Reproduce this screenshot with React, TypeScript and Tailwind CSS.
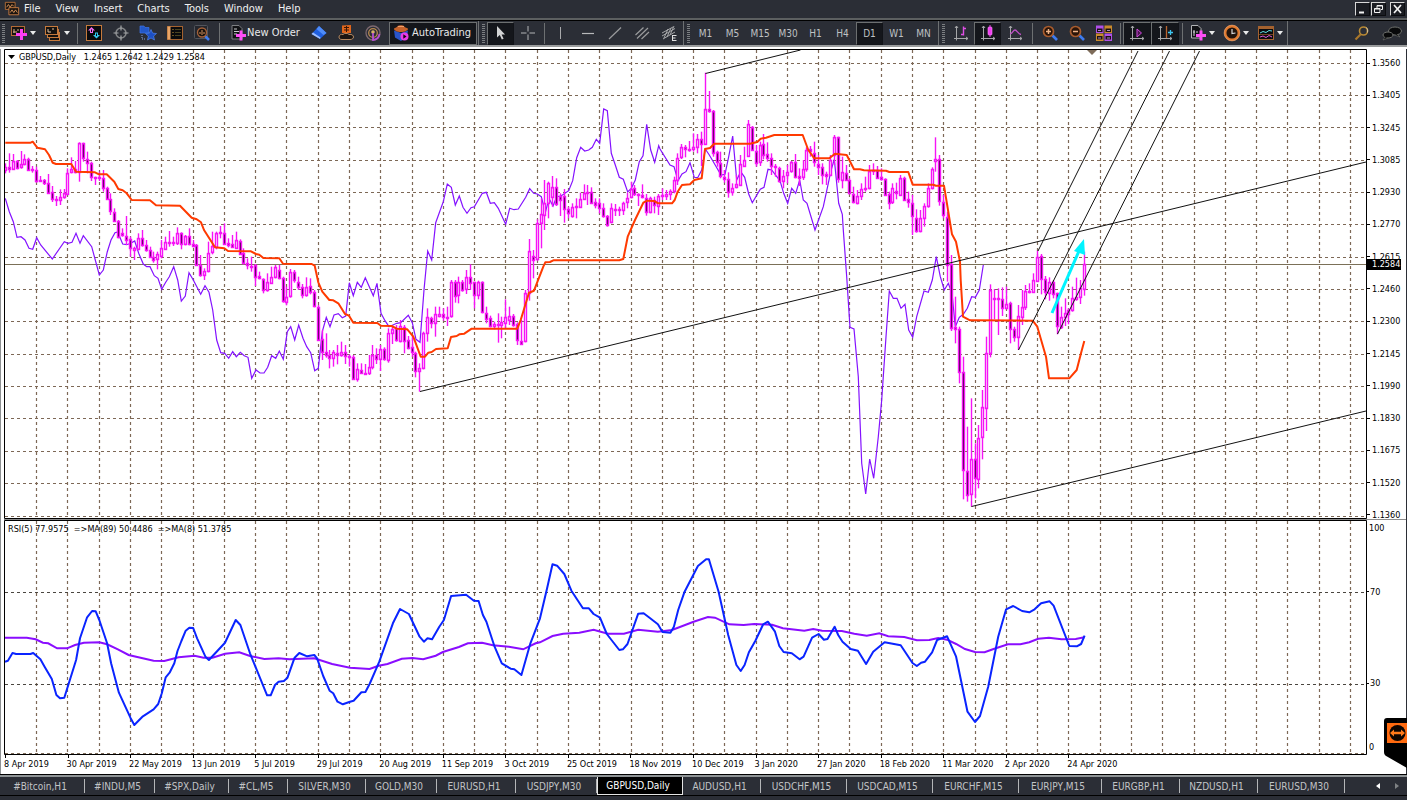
import React from "react";
import type { ReactNode } from "react";

/* ---------- market data ---------- */

// Bars are stored as "high top bottom low direction", in thirds of a chart unit below `base`.
const BAR_BLOCKS: { base: number; bars: string }[] = [
  {
    base: 120,
    bars:
      "130 140 150 160 u|100 140 145 158 d|102 122 145 150 u|120 122 142 148 d|93 133 143 146 u|103 117 133 136 u|113 116 148 150 d|138 147 151 158 d|140 150 183 188 d|168 180 183 186 d|177 180 190 195 d|162 188 217 220 d|198 216 238 246 d|228 237 241 258 d|208 230 240 255 u|207 220 232 236 u|145 158 220 223 u|112 147 157 160 u|123 147 157 160 d|67 70 157 185 u|68 70 115 125 d|95 117 130 160 d|125 130 173 183 d|170 172 174 195 d|155 171 174 183 d|150 175 205 215 d|200 205 237 240 d|220 237 273 285 d|265 275 303 306 d|300 303 350 355 d|325 340 347 350 d|288 347 360 375 d|350 358 385 410 d|380 385 390 420 u|340 353 387 390 u|330 353 375 380 d|360 375 390 395 d|380 390 410 413 d|395 410 418 428 d|395 403 418 448 u|360 385 408 415 u|350 365 385 390 u|333 367 370 380 d|350 367 370 378 d|322 340 370 375 u|337 340 372 388 d|345 348 373 376 u|325 348 373 376 d|360 372 378 382 d|372 374 435 437 d|405 435 466 470 d|445 452 465 480 u|365 398 452 457 u|335 377 395 403 u|335 338 380 388 u|318 337 340 355 u|310 338 372 375 d|355 370 375 382 d|345 372 380 384 d|335 360 383 385 u|358 362 400 403 d|385 400 430 433 d|415 430 435 448 d|410 437 440 455 d|432 435 470 498 d|455 468 475 478 d|475 476 510 520 d|460 487 510 515 u|440 472 490 492 u|435 440 470 475 u|435 450 475 478 d|470 475 545 548 d|500 530 545 556 u|447 457 530 533 u|450 457 480 488 d|470 485 500 510 d|492 500 523 535 d|472 500 523 530 u|475 498 515 523 d|510 517 560 562 d|555 560 660 662 d|630 658 698 720 d|640 695 705 713 d|690 705 713 745 d|690 695 713 740 u|675 700 705 733 d",
  },
  {
    base: 90,
    bars:
      "755 785 795 800 u|765 785 797 822 d|793 798 802 830 d|795 800 867 870 d|820 838 868 875 u|820 840 848 852 d|822 848 850 855 d|795 832 850 855 u|765 795 832 838 u|775 795 808 822 d|765 778 808 843 u|772 778 808 812 d|715 728 808 818 u|710 718 730 762 u|705 715 752 755 d|690 708 752 757 u|705 710 752 790 d|738 750 773 778 d|735 772 787 800 d|785 790 843 862 d|820 835 843 905 u|725 730 835 838 u|655 680 728 755 u|680 683 698 715 d|650 672 700 740 u|650 672 678 682 u|655 672 682 692 d|650 680 683 708 d|570 577 680 683 u|570 577 620 638 d|560 577 617 640 u|570 577 600 605 d|540 562 598 612 u|523 562 580 600 d|575 577 617 655 d|572 577 617 628 u|574 577 668 670 d|650 668 685 700 d|677 683 707 712 d|695 703 708 718 u|670 703 706 758 d|680 695 703 745 u|628 680 697 715 u|650 678 690 705 u|672 677 705 710 d|697 703 750 765 d|690 752 760 763 d|600 610 755 757 u|447 482 608 632 u|480 497 510 565 d|388 400 508 512 u|325 373 400 475 u|270 338 373 420 u|275 280 340 385 u|258 290 320 350 u|265 292 343 348 d|310 318 330 378 d|297 318 358 398 d|350 357 370 385 d|340 352 380 383 u|325 348 352 385 u|308 327 350 353 u|283 308 325 328 u|285 305 308 345 u|292 305 337 342 d|325 335 343 355 d|325 340 355 370 d|340 355 378 383 d|375 378 405 410 d|340 355 397 400 u|342 358 362 378 d|350 358 362 378 u|335 338 360 375 u|308 325 338 355 u|275 297 322 325 u|285 295 312 318 d|310 312 315 348 d|283 315 320 325 d|312 325 368 377 d|320 325 367 370 u|320 330 345 370 d|312 317 347 375 u|295 315 318 330 u|300 312 318 330 u|298 303 312 330 u|260 270 303 310 u|190 205 270 285 u",
  },
  {
    base: 60,
    bars:
      "252 262 293 297 u|255 262 267 292 d|243 268 272 275 u|220 262 268 275 u|222 238 262 280 u|215 238 253 318 d|38 147 252 255 u|93 147 152 158 d|150 153 278 290 d|272 276 307 320 d|275 310 350 355 d|330 352 357 368 d|337 357 397 413 d|370 383 395 407 u|345 373 382 385 u|285 313 375 378 u|260 300 317 320 u|180 193 288 290 u|198 200 270 272 d|255 272 307 320 d|245 255 305 318 u|222 253 285 298 d|247 283 296 305 d|280 295 318 345 d|312 318 322 350 d|320 325 363 368 d|330 347 363 385 u|315 335 345 370 u|303 307 335 338 u|282 307 353 355 d|325 348 353 378 d|300 328 353 360 u|262 270 328 335 u|258 268 275 290 d|245 280 308 320 d|285 312 320 345 d|310 320 343 373 d|335 342 347 375 d|285 300 345 348 u|225 230 285 315 u|230 232 358 368 d|290 335 358 385 u|315 338 358 362 d|355 360 400 403 d|380 402 427 430 d|390 408 430 433 u|370 388 408 420 u|350 385 388 395 u|315 332 383 388 u|310 330 333 345 u|318 330 353 357 d|325 352 358 362 d|355 357 405 408 d|395 403 430 448 d|370 385 428 432 u|368 393 400 418 d|345 353 403 405 u|350 353 420 423 d|395 418 428 443 d|405 430 470 525 d|448 473 512 518 d|450 473 512 517 u|430 437 473 500 u|370 383 437 443 u|322 328 385 388 u|232 297 303 335 u|285 298 425 437 d|405 425 465 475 d|455 470 613 665 d",
  },
  {
    base: 230,
    bars:
      "75 103 295 303 d|200 292 297 340 d|290 297 427 460 d|380 427 722 808 d|590 722 793 815 d|505 688 793 830 u|640 688 745 805 d|585 623 745 775 u|480 532 622 688 u|320 368 532 603 u|163 180 368 382 u|177 203 206 268 d|175 205 208 315 d|172 207 233 258 d|170 222 235 238 u|215 220 298 340 d|290 298 322 335 d|225 258 322 360 u|180 230 260 285 u|165 183 230 240 u|160 183 186 190 d|130 150 185 188 u|62 80 152 155 u|72 78 148 193 d|138 147 187 208 d|142 155 187 212 u|150 155 190 205 d|188 190 290 313 d|230 260 290 297 u|205 250 262 288 u|235 240 252 283 u|170 205 240 245 u|143 200 205 212 u|150 175 203 222 u|65 103 178 197 u",
  },
];

type Bar = { x: number; high: number; top: number; bottom: number; low: number; up: boolean };

const BARS: Bar[] = BAR_BLOCKS.flatMap(({ base, bars }) =>
  bars.split("|").map((entry) => {
    const [high, top, bottom, low, dir] = entry.split(" ");
    const y = (v: string) => base + Number(v) / 3;
    return { high: y(high), top: y(top), bottom: y(bottom), low: y(low), up: dir === "u" };
  }),
).map((bar, i) => ({ ...bar, x: Math.floor(5.4 + 3.91 * i) + 0.5 }));

// Polylines are made of blocks, each with its own origin and scale.
type LineBlock = { x: number; y: number; sx?: number; points: string };

const toPoints = (blocks: LineBlock[]) =>
  blocks
    .map(({ x, y, sx = 3, points }) =>
      points
        .split(" ")
        .map((pair) => {
          const [px, py] = pair.split(",").map(Number);
          return `${(x + px / sx).toFixed(1)},${(y + py / 3).toFixed(1)}`;
        })
        .join(" "),
    )
    .join(" ");

const BASE_LINE = toPoints([
  {
    x: 0,
    y: 120,
    points:
      "16,68 92,68 98,65 112,83 135,88 147,105 158,128 168,132 214,132 228,155 285,157 297,163 320,163 343,185 355,207 368,211 380,220 395,240 450,241 468,256 540,257 575,293 590,298 603,307 612,330 645,382 673,385 684,393 753,394 768,402 778,404 790,414 838,415 849,431 935,432 944,437 955,487 967,515 988,540",
  },
  {
    x: 330,
    y: 90,
    points:
      "0,630 10,631 25,640 45,672 57,677 70,698 142,699 153,707 185,708 200,716 232,718 250,740 272,800 285,800 295,788 305,786 318,777 353,775 363,741 380,738 388,733 403,731 425,716 562,716 572,690 597,608 612,602 640,530 646,517 660,516 670,511 868,511 880,507 893,440 915,390 940,338 952,332 972,333 985,340",
  },
  {
    x: 660,
    y: 60,
    points:
      "0,430 36,430 44,420 53,395 66,375 90,373 103,360 125,355 135,267 150,264 163,251 270,251 292,246 302,236 318,233 343,225 428,225 445,270 463,295 508,295 525,281 560,285 582,328 600,328 612,331 678,332 688,336 745,336 758,374 820,374 828,377 852,377 876,523 888,545 900,605",
  },
  {
    x: 830,
    y: 230,
    points: "392,150 399,260 420,271 608,272 622,290 648,380 657,445 718,445 740,420 753,370 763,333",
  },
]);

const LAG_LINE = toPoints([
  {
    x: 0,
    y: 120,
    points:
      "16,235 28,275 40,305 51,352 63,350 75,360 87,385 98,388 110,353 122,375 157,417 193,365 204,370 216,367 228,340 240,370 250,347 275,380 298,465 310,450 322,395 333,360 345,338 353,336 368,372 380,374 392,370 404,363 416,400 430,432 440,440 450,440 463,467 474,475 485,508 497,487 508,470 521,440 533,480 544,543 556,528 567,458 580,480 602,523 615,497 627,517 638,570 650,660 662,698 674,700 686,715 698,695 709,710 721,697 733,707 744,712 755,775 768,750 780,759 792,759 803,742 815,707 827,715 838,693 850,718 862,635 872,620 884,660 896,615 909,655 920,680 932,698 944,752 955,745 967,635 979,592",
  },
  {
    x: 330,
    y: 90,
    points:
      "0,710 12,675 25,671 37,683 47,678 58,578 70,617 82,577 94,592 106,563 130,617 141,580 153,670 165,692 177,710 200,700 212,698 235,676 247,698 258,748 270,757 282,600 293,483 305,510 317,398 340,335 352,282 364,292 376,345 388,318 399,352 411,370 423,353 433,350 457,310 469,307 481,340 493,338 505,355 527,403 539,355 552,359 565,357 587,322 599,296 611,310 622,312 634,320 646,368 657,325 669,348 680,320 693,318 716,302 728,272 740,203 752,172 764,183 776,180 787,172 799,148 809,160 821,57 832,62 844,190 856,225 868,262 880,268 893,306 904,295 916,270 928,215 939,197 950,103 962,180 974,217 986,167",
  },
  {
    x: 660,
    y: 60,
    points:
      "0,267 30,315 42,320 54,362 66,342 78,335 90,308 103,352 113,353 125,330 136,267 148,285 160,305 183,345 195,343 206,290 218,228 230,360 242,335 254,352 266,402 277,428 301,388 312,382 324,328 335,330 348,347 360,362 371,400 383,430 395,385 407,400 419,360 430,420 441,430 465,510 490,440 505,370 512,335 523,298 536,430 547,463",
  },
  {
    x: 830,
    y: 230,
    points:
      "40,0 50,140 60,292 72,297 85,440 95,700 107,792 119,687 131,745 145,620 155,510 168,320 178,183 190,205 201,205 213,235 225,223 236,300 248,322 260,260 282,183 295,187 307,150 319,80 331,140 343,180 355,160 366,190 376,290 388,262 400,253 412,235 425,200 436,202 448,180 460,105",
  },
]);

const RSI_SLOW = toPoints([
  {
    x: 0,
    y: 515,
    sx: 2.8,
    points:
      "14,368 75,368 100,373 120,383 135,385 160,400 188,400 210,390 235,383 278,382 300,388 330,403 360,420 430,437 460,438 500,427 545,422 570,428 595,428 630,416 670,412 700,423 740,432 780,430 810,433 880,430 930,447 980,458 1035,462 1060,452 1085,447 1125,431 1155,429 1185,433 1220,422 1240,411 1285,396 1310,385 1350,383 1380,391 1425,395 1465,403 1500,385",
  },
  {
    x: 540,
    y: 515,
    sx: 2.8,
    points:
      "0,382 35,363 65,356 110,353 150,344 190,356 235,356 275,344 330,350 370,345 430,320 470,306 490,308 530,328 570,330 600,327 650,329 680,340 740,347 765,342 790,347 845,348 880,356 915,362 950,355 975,364 1020,366 1055,376 1090,375 1115,369 1140,374 1165,387 1190,402 1218,411 1245,412 1270,402 1310,388 1345,388 1370,382 1395,371 1425,368 1460,373 1500,372 1524,367",
  },
]);

const RSI_FAST = toPoints([
  {
    x: 0,
    y: 515,
    sx: 2.8,
    points:
      "14,440 22,437 35,414 45,417 85,417 93,414 113,433 125,455 145,492 158,540 168,550 180,548 213,435 224,370 244,307 258,288 268,289 278,315 300,385 311,445 333,533 365,608 376,630 400,604 430,583 443,567 453,535 464,487 475,473 488,445 497,408 508,378 520,347 530,338 541,339 552,370 575,425 585,435 630,383 660,315 673,330 700,415 748,541 758,541 770,510 780,500 795,498 805,488 825,428 838,414 860,424 880,420 888,430 905,483 923,527 933,535 945,560 960,568 980,560 990,557 1012,532 1023,531 1035,507 1062,440 1100,325 1120,282 1145,297 1175,365 1187,380 1197,370 1210,373 1230,335 1243,315 1263,243 1305,239 1327,257 1340,258 1352,300 1362,320 1385,395 1405,445 1430,461 1440,463 1460,480 1485,385",
  },
  {
    x: 540,
    y: 515,
    sx: 2.8,
    points:
      "0,310 20,220 35,148 48,152 68,177 88,227 120,280 137,280 150,297 168,308 187,357 222,405 232,403 245,387 275,296 290,295 305,307 330,328 343,351 365,353 375,335 387,285 405,230 442,153 465,133 473,133 500,230 527,360 550,450 562,468 573,450 585,412 603,377 625,328 638,320 658,350 670,393 682,411 705,415 727,433 738,425 762,368 780,357 795,374 805,372 825,335 835,360 847,380 870,402 890,407 913,447 933,410 965,382 1010,391 1043,444 1055,453 1067,443 1078,440 1098,412 1112,375 1140,364 1165,425 1197,590 1218,621 1232,603 1255,515 1283,365 1305,283 1325,273 1350,288 1370,292 1385,283 1403,265 1427,259 1438,272 1482,393 1503,394 1515,387 1525,362",
  },
]);

const PRICES = [
  "1.3560", "1.3405", "1.3245", "1.3085", "1.2930", "1.2770", "1.2615", "1.2460",
  "1.2300", "1.2145", "1.1990", "1.1830", "1.1675", "1.1520", "1.1360",
];

const DATES = [
  "8 Apr 2019", "30 Apr 2019", "22 May 2019", "13 Jun 2019", "5 Jul 2019", "29 Jul 2019",
  "20 Aug 2019", "11 Sep 2019", "3 Oct 2019", "25 Oct 2019", "18 Nov 2019", "10 Dec 2019",
  "3 Jan 2020", "27 Jan 2020", "18 Feb 2020", "11 Mar 2020", "2 Apr 2020", "24 Apr 2020",
];

const COLUMNS = Array.from({ length: 43 }, (_, i) => Math.floor(5.4 + 31.28 * (i + 1)) + 0.5);
const ROWS = PRICES.map((_, i) => Math.floor(63 + 32.36 * i) + 0.5);

/* ---------- icons ---------- */

function Icon({ children, className = "h-[18px] w-[18px]" }: { children: ReactNode; className?: string }) {
  return (
    <svg viewBox="0 0 18 18" className={className} fill="none" aria-hidden="true">
      {children}
    </svg>
  );
}

const NewChartIcon = () => (
  <Icon>
    <rect x="1.5" y="2.5" width="13" height="9" fill="#15120f" stroke="#b36a35" />
    <path d="M4 5v4M3 8h4M7 6h2M11 5v2" stroke="#d8b08a" />
    <path d="M11.5 5v11M6 10.5h11" stroke="#ff3df5" strokeWidth="3" />
  </Icon>
);
const ProfilesIcon = () => (
  <Icon>
    <rect x="5.5" y="8.5" width="10" height="8" fill="#15120f" stroke="#c67a3c" />
    <rect x="3.5" y="5.5" width="11" height="8" fill="#15120f" stroke="#c67a3c" />
    <rect x="1.5" y="2.5" width="12" height="8" fill="#15120f" stroke="#c67a3c" />
    <path d="M4 5v3M4 8h3M8 5h2" stroke="#e3c3a3" />
  </Icon>
);
const MarketWatchIcon = () => (
  <Icon>
    <rect x="1.5" y="1.5" width="15" height="15" fill="#0a0a0c" stroke="#c67a3c" />
    <path d="M6.5 3 10 6.500H8V9H5V6.500H3Z" fill="#f06cf0" />
    <path d="M11.500 14.500 8 11h2V8.500h3V11h2Z" fill="#31c8f2" />
    <path d="M6.500 5.500V8M11.500 9.500V12" stroke="#0a0a0c" />
  </Icon>
);
const TargetIcon = () => (
  <Icon>
    <circle cx="9" cy="9" r="5" stroke="#858789" strokeWidth="1.5" />
    <path d="M9 1.500v5M9 11.500v5M1.500 9h5M11.500 9h5" stroke="#a5a7a9" strokeWidth="1.2" />
  </Icon>
);
const NavigatorIcon = () => (
  <Icon>
    <path d="M1 2h4l1 1.500h4V9H1Z" fill="#2358c8" stroke="#3d74e6" strokeWidth=".7" />
    <path d="m3 11 0 4h4" stroke="#8ea6d8" strokeDasharray="1 1" />
    <path d="m12 5.500 1.600 3.600 3.900.4-2.900 2.600.9 3.900-3.500-2-3.500 2 .9-3.900-2.900-2.600 3.900-.4Z" fill="#1c4fc4" stroke="#4f84ee" strokeWidth=".7" />
  </Icon>
);
const TerminalIcon = () => (
  <Icon>
    <rect x="1.5" y="2.5" width="15" height="13" fill="#0a0a0c" stroke="#a4622f" />
    <rect x="1.5" y="2.5" width="3" height="13" fill="#e9a566" />
    <path d="M6.500 5.500h1M6.500 8.500h1M6.500 11.500h1" stroke="#c8963a" />
    <path d="M9 5.500h6M9 8.500h6M9 11.500h6" stroke="#4b4320" />
  </Icon>
);
const TesterIcon = () => (
  <Icon>
    <rect x="1.5" y="1.5" width="13" height="13" rx="1" fill="#24262d" stroke="#52555c" />
    <path d="m12 12 4 4" stroke="#3e7bf0" strokeWidth="2.5" />
    <circle cx="9" cy="8.500" r="4.500" fill="#17110d" stroke="#a3613a" strokeWidth="1.4" />
    <path d="M7 10V8M9 11V6M11 10V8" stroke="#d69461" />
  </Icon>
);
const OrderIcon = () => (
  <Icon>
    <path d="M3 1.500h7l3 3V15H3Z" fill="#101114" stroke="#7d7f82" />
    <path d="M5 5h3M5 7.500h5M5 10h3" stroke="#c9cbcc" />
    <path d="M12 6.500v10M7 11.500h10" stroke="#ff4df7" strokeWidth="3" />
  </Icon>
);
const BookIcon = () => (
  <Icon>
    <path d="M9 2 16.500 9 10 15 1.500 10Z" fill="#1f5fe0" />
    <path d="M9 2 16.500 9 13.500 11 6.500 5Z" fill="#4f8cf8" />
    <path d="M1.500 10 10 15l.5-1.500L3 8.500Z" fill="#9fbfff" />
  </Icon>
);
const ServerIcon = () => (
  <Icon>
    <path d="M5 1.500 14 1v8H5Z" fill="#e0661c" />
    <path d="M7 3.500h5M7 6h5M9.500 2v6" stroke="#3a1604" />
    <path d="M2 13c0-2 2-3 4-2.500C7 9 11 9 12 10.500c3-.5 4.500 1 4.500 2.500S15 15.500 13 15.500H5c-2 0-3-1-3-2.500Z" fill="#1a1512" stroke="#b58a63" />
  </Icon>
);
const SignalIcon = () => (
  <Icon>
    <circle cx="9" cy="9" r="7" stroke="#7e6a70" strokeWidth="1.3" />
    <circle cx="9" cy="9" r="4.300" stroke="#b98a4e" strokeWidth="1.3" />
    <circle cx="9" cy="8" r="1.800" fill="#d9b26a" />
    <path d="M9 9v7c4-.5 6-3 6.500-6" stroke="#b34fd0" strokeWidth="1.8" />
  </Icon>
);
const AutoIcon = () => (
  <Icon>
    <path d="M2 6.500 9 9l7-2.500-1 6.500-6 4-6-3.500Z" fill="#2a55c9" />
    <path d="M2 5c0-1.500 3-1 3.500-3C7 1 11 1 12 2c.5 2 4 1.500 4 3s-3 3-7 3-7-1.500-7-3Z" fill="#c5622b" />
    <path d="M6 2.500h6" stroke="#f0a06b" />
    <circle cx="12.500" cy="12.500" r="4" fill="#e83be8" />
    <path d="m11.300 10.300 3.200 2.200-3.200 2.200Z" fill="#15040f" />
  </Icon>
);
const CursorIcon = () => (
  <Icon>
    <path d="M5 2v11.500l2.800-2.500 2 4.500 1.800-.8-2-4.300H13Z" fill="#d2d3d4" />
  </Icon>
);
const CrosshairIcon = () => (
  <Icon>
    <path d="M9 2v5.500M9 10.500V16M2 9h5.500M10.500 9H16" stroke="#b3b4b6" />
  </Icon>
);
const VLineIcon = () => (
  <Icon>
    <path d="M8.500 3v12" stroke="#a8a9ab" />
  </Icon>
);
const HLineIcon = () => (
  <Icon>
    <path d="M3 9.500h12" stroke="#b8b9bb" strokeWidth="1.2" />
  </Icon>
);
const TrendIcon = () => (
  <Icon>
    <path d="M3 15 15 3.500" stroke="#9a9b9d" strokeWidth="1.2" />
  </Icon>
);
const ChannelIcon = () => (
  <Icon>
    <path d="m2.500 11 8-7.500M4 14.500 15 4M8.500 15l7.500-7" stroke="#9a9b9d" strokeWidth="1.2" />
  </Icon>
);
const FiboIcon = () => (
  <Icon>
    <path d="M2 9 13 3M2 12 15 4.500M3 15 15 8M4 14 8 5M7 13l4-9M10 11l4-9" stroke="#a5a6a8" />
    <path d="M12.500 11.500h4M12.500 14h3M12.500 16.500h4M12.500 11v6" stroke="#e0e0e0" />
  </Icon>
);
const Axes = () => (
  <path d="M4.500 2v14.500M2 14.500h14M3 4l1.500-2L6 4M14 13l2 1.500-2 1.500" stroke="#a6a7a9" />
);
const BarsIcon = () => (
  <Icon>
    <Axes />
    <path d="M11.500 2.500v9M9 10.500h2.500M11.500 4.500H14" stroke="#e04fe6" strokeWidth="1.4" />
  </Icon>
);
const CandlesIcon = () => (
  <Icon>
    <Axes />
    <path d="M11 1v12" stroke="#f03df0" />
    <rect x="9" y="3" width="4" height="8" rx="1" fill="#f03df0" stroke="#ff8cff" strokeWidth=".6" />
  </Icon>
);
const LineChartIcon = () => (
  <Icon>
    <Axes />
    <path d="M4 10c3-1 3-4 5-4s3 4 6 4.500" stroke="#c04fc8" strokeWidth="1.3" />
  </Icon>
);
const ZoomGlyph = ({ plus }: { plus: boolean }) => (
  <Icon>
    <path d="m11.500 11.500 4.500 4.500" stroke="#3e7bf0" strokeWidth="2.6" />
    <circle cx="7.500" cy="7.500" r="5" fill="#2a1408" stroke="#a85c2e" strokeWidth="1.7" />
    <path d={plus ? "M5 7.500h5M7.500 5v5" : "M5 7.500h5"} stroke="#f0b488" strokeWidth="1.5" />
  </Icon>
);
const TileIcon = () => (
  <Icon>
    <path d="M1 1.500h7.500V9H1ZM9.500 9.500H17V17H9.500Z" fill="#b04fe8" />
    <path d="M9.500 1.500H17V9H9.500ZM1 9.500h7.500V17H1Z" fill="#c98a2c" />
    <path d="M2 4.500h5.500V8H2ZM10.500 4.500H16V8h-5.500ZM2 12h5.500v3.500H2ZM10.500 12H16v3.500h-5.500Z" fill="#1b1013" />
    <path d="M3 6.500h3M12 6.500h3M3 14h3M12 14h3" stroke="#a98bc0" />
  </Icon>
);
const ScrollIcon = () => (
  <Icon>
    <Axes />
    <path d="M9 5v8l4.500-4Z" fill="#4a1550" stroke="#d048dc" />
  </Icon>
);
const ShiftIcon = () => (
  <Icon>
    <Axes />
    <path d="M10.500 2v12" stroke="#b9652f" strokeWidth="1.3" />
    <path d="M17 8.500h-5M14.500 6v5" stroke="#3cc5f0" strokeWidth="1.3" />
  </Icon>
);
const IndicatorIcon = () => (
  <Icon>
    <path d="M2.500 1.500H9l3 3V14H2.500Z" fill="#101114" stroke="#b1b3b5" />
    <path d="M5 12V6M7 8h2M4 8h2" stroke="#d6d7d8" />
    <path d="M12 6.500v10M7 11.500h10" stroke="#ff4df7" strokeWidth="3" />
  </Icon>
);
const ClockIcon = () => (
  <Icon>
    <circle cx="9" cy="9" r="6.800" fill="#22140c" stroke="#e27a2e" strokeWidth="2.4" />
    <circle cx="9" cy="9" r="7.900" stroke="#f6b98a" strokeWidth=".5" />
    <path d="M9 5v4.500l3.500-.5" stroke="#d9d9d9" strokeWidth="1.2" />
  </Icon>
);
const TemplateIcon = () => (
  <Icon>
    <rect x="1.5" y="2.5" width="15" height="13" fill="#0b0b0d" stroke="#a4622f" />
    <path d="M2 3h14v2H2Z" fill="#a4622f" />
    <path d="m3 9 3-1.500 3 1 3-2 3 .5" stroke="#5fe0e6" />
    <path d="m3 13 3-1 3 1.500 3-2 3 1.500" stroke="#e05ad8" />
    <path d="M2 10.500h14" stroke="#6e4322" />
  </Icon>
);
const SearchIcon = () => (
  <Icon>
    <path d="m7.500 10.500-5 5" stroke="#a8762a" strokeWidth="2.2" />
    <circle cx="10.500" cy="7" r="4" stroke="#b98a34" strokeWidth="1.6" />
    <path d="M13.500 3.500a5 5 0 0 1 1 5" stroke="#d9d2c0" strokeWidth=".8" />
  </Icon>
);
const ChatIcon = () => (
  <svg viewBox="0 0 22 18" className="h-[18px] w-[22px]" fill="none" aria-hidden="true">
    <ellipse cx="14" cy="7" rx="6.500" ry="4" fill="#08090a" stroke="#6e706c" />
    <path d="m16 10 3 3-5.500-2" fill="#08090a" stroke="#6e706c" strokeWidth=".6" />
    <ellipse cx="7" cy="11" rx="5" ry="3" fill="#08090a" stroke="#6e706c" />
    <path d="m4 13-2 3 5-2" fill="#08090a" stroke="#6e706c" strokeWidth=".6" />
  </svg>
);

/* ---------- toolbar parts ---------- */

type ToolProps = { label: string; children: ReactNode; active?: boolean; width?: string };

function Tool({ label, children, active = false, width = "w-[27px]" }: ToolProps) {
  return (
    <button
      type="button"
      aria-label={label}
      className={`flex h-[23px] shrink-0 items-center justify-center border ${width} ${
        active ? "border-[#6c6f70] border-r-[#111318] border-b-[#111318] bg-[#14161b]" : "border-transparent"
      }`}
    >
      {children}
    </button>
  );
}

function DropTool({ label, children }: { label: string; children: ReactNode }) {
  return (
    <button type="button" aria-label={label} className="flex h-[23px] w-[34px] shrink-0 items-center gap-0.5 pl-1">
      {children}
      <svg viewBox="0 0 6 4" className="h-1 w-1.5" aria-hidden="true">
        <path d="M0 0h6L3 4Z" fill="#e9eaea" />
      </svg>
    </button>
  );
}

function Sep({ width = "w-1.5" }: { width?: string }) {
  return (
    <span className={`flex h-full shrink-0 items-center justify-center ${width}`}>
      <span className="h-[21px] w-px bg-[#6d7072]" />
    </span>
  );
}

function Grip() {
  return (
    <span className="h-[19px] w-[3px] shrink-0 bg-[repeating-linear-gradient(to_bottom,#7c7f82_0px,#7c7f82_1px,#2b2e36_1px,#2b2e36_2px)]" />
  );
}

function GroupBreak() {
  return (
    <span className="flex h-full w-2.5 shrink-0 items-center gap-[3px] pl-px">
      <span className="h-full w-px bg-[#6d7072]" />
      <Grip />
    </span>
  );
}

const PERIODS: [string, string][] = [
  ["M1", "w-[27px]"],
  ["M5", "w-[27px]"],
  ["M15", "w-[28px]"],
  ["M30", "w-[28px]"],
  ["H1", "w-[27px]"],
  ["H4", "w-[27px]"],
  ["D1", "w-[27px]"],
  ["W1", "w-[27px]"],
  ["MN", "w-[27px]"],
];

function Toolbar() {
  return (
    <div role="toolbar" className="flex h-[25px] shrink-0 items-center overflow-hidden border-t border-black bg-[#2b2e36] text-[11px] text-[#e8e9ea]">
      <span className="flex w-1.5 shrink-0 pl-0.5">
        <Grip />
      </span>
      <DropTool label="New chart"><NewChartIcon /></DropTool>
      <DropTool label="Profiles"><ProfilesIcon /></DropTool>
      <Sep />
      <Tool label="Market watch"><MarketWatchIcon /></Tool>
      <Tool label="Data window"><TargetIcon /></Tool>
      <Tool label="Navigator"><NavigatorIcon /></Tool>
      <Tool label="Terminal"><TerminalIcon /></Tool>
      <Tool label="Strategy tester"><TesterIcon /></Tool>
      <Sep width="w-2" />
      <button type="button" className="flex h-[23px] w-[82px] shrink-0 items-center pl-1.5 whitespace-nowrap">
        <OrderIcon />
        New Order
      </button>
      <Tool label="Editor"><BookIcon /></Tool>
      <Tool label="Hosting"><ServerIcon /></Tool>
      <Tool label="Signals"><SignalIcon /></Tool>
      <button
        type="button"
        className="ml-[3px] flex h-[23px] w-[88px] shrink-0 items-center gap-0.5 border border-[#6c6f70] bg-[#14161b] pl-0.5 whitespace-nowrap"
      >
        <AutoIcon />
        AutoTrading
      </button>
      <GroupBreak />
      <Tool label="Cursor" active><CursorIcon /></Tool>
      <Tool label="Crosshair"><CrosshairIcon /></Tool>
      <Sep />
      <Tool label="Vertical line"><VLineIcon /></Tool>
      <Tool label="Horizontal line"><HLineIcon /></Tool>
      <Tool label="Trendline"><TrendIcon /></Tool>
      <Tool label="Channel"><ChannelIcon /></Tool>
      <Tool label="Fibonacci"><FiboIcon /></Tool>
      <GroupBreak />
      {PERIODS.map(([name, width]) => (
        <Tool key={name} label={name} width={width} active={name === "D1"}>
          <span className="text-[10px] text-[#bfc1c3]">{name}</span>
        </Tool>
      ))}
      <GroupBreak />
      <Tool label="Bar chart"><BarsIcon /></Tool>
      <Tool label="Candlesticks" active><CandlesIcon /></Tool>
      <Tool label="Line chart"><LineChartIcon /></Tool>
      <Sep width="w-2" />
      <Tool label="Zoom in"><ZoomGlyph plus /></Tool>
      <Tool label="Zoom out"><ZoomGlyph plus={false} /></Tool>
      <Tool label="Tile windows"><TileIcon /></Tool>
      <Sep />
      <Tool label="Auto scroll" active width="w-[28px]"><ScrollIcon /></Tool>
      <Tool label="Chart shift" active width="w-[28px]"><ShiftIcon /></Tool>
      <Sep />
      <DropTool label="Indicators"><IndicatorIcon /></DropTool>
      <DropTool label="Periods"><ClockIcon /></DropTool>
      <DropTool label="Templates"><TemplateIcon /></DropTool>
      <span className="h-full w-px shrink-0 bg-[#6d7072]" />
      <div className="ml-auto flex shrink-0 items-center gap-2.5 pr-1">
        <button type="button" aria-label="Search"><SearchIcon /></button>
        <button type="button" aria-label="Chat"><ChatIcon /></button>
      </div>
    </div>
  );
}

function WindowButton({ label, children }: { label: string; children: ReactNode }) {
  return (
    <button
      type="button"
      aria-label={label}
      className="flex h-[14px] w-[15px] items-center justify-center border border-t-[#d8d8d8] border-r-[#0c0d10] border-b-[#0c0d10] border-l-[#d8d8d8] bg-[#1b1d23]"
    >
      <svg viewBox="0 0 11 10" className="h-2.5 w-[11px]" fill="none" stroke="#f2f2f2" aria-hidden="true">
        {children}
      </svg>
    </button>
  );
}

function MenuBar() {
  return (
    <header className="flex h-[18px] shrink-0 items-center bg-[#2b2e36] text-[11px] leading-4 text-[#f0f1f1]">
      <svg viewBox="0 0 18 18" className="mr-1 ml-1 h-4 w-4" fill="none" aria-hidden="true">
        <path d="M1.500 1.500h11v8h-11Z" fill="#1a1410" stroke="#b9713a" />
        <path d="M5.500 7.500h11v8h-11Z" fill="#1a1410" stroke="#cf8145" />
        <path d="M3 7 5 4l2 3 2-3 2 2M7 13l2-3 2 3 2-3 2 3" stroke="#e09a5e" />
      </svg>
      <nav className="flex gap-[15px]">
        {["File", "View", "Insert", "Charts", "Tools", "Window", "Help"].map((item) => (
          <button key={item} type="button">
            {item}
          </button>
        ))}
      </nav>
      <div className="ml-auto flex gap-px pr-0.5">
        <WindowButton label="Minimize"><path d="M2 8.500h5" strokeWidth="2" /></WindowButton>
        <WindowButton label="Restore"><path d="M4 4V1.500h5.500v4H8M1.500 4.500h5.500v4H1.500ZM4 2h5.500M1.500 5h5.500" /></WindowButton>
        <span className="w-0.5" />
        <WindowButton label="Close"><path d="m2 1 7 8M9 1 2 9" strokeWidth="1.7" /></WindowButton>
      </div>
    </header>
  );
}

/* ---------- charts ---------- */

function Columns({ from, to }: { from: number; to: number }) {
  return (
    <g stroke="#7d6856" strokeDasharray="3 3" strokeWidth="1.2">
      {COLUMNS.map((x) => (
        <line key={x} x1={x} x2={x} y1={from} y2={to} />
      ))}
    </g>
  );
}

function PricePlot() {
  return (
    <svg viewBox="4 49 1363 470" preserveAspectRatio="none" className="h-full min-h-0 w-full min-w-0" fill="none">
      <Columns from={50} to={518} />
      <g stroke="#7d6856" strokeDasharray="3 3" strokeWidth="1.2">
        {ROWS.map((y) => (
          <line key={y} x1="5" x2="1366" y1={y} y2={y} />
        ))}
      </g>
      <path d="M5 264.500H1366" stroke="#7b7058" />
      <polyline points={LAG_LINE} stroke="#8412ff" strokeWidth="1.2" />
      <g stroke="#f614f6" strokeWidth="1.4">
        {BARS.map((bar) => {
          const top = Math.round(bar.top) + 0.5;
          const height = Math.max(1, Math.round(bar.bottom - bar.top));
          return (
            <g key={bar.x}>
              <line x1={bar.x} x2={bar.x} y1={bar.high} y2={bar.low} />
              <rect x={bar.x - 1} y={top} width="2" height={height} fill={bar.up ? "#fff" : "#1c001a"} />
            </g>
          );
        })}
      </g>
      <polyline points={BASE_LINE} stroke="#ff3a00" strokeWidth="2" strokeLinejoin="round" />
      <g stroke="#111">
        <path d="M705.500 73.500 800.500 50M420 391.500 1366 162M971.500 506.500 1366 411" />
        <path d="M1038 251 1138 51M1018.500 350 1169.500 51M1057.500 334 1199.500 51" />
      </g>
      <path d="M1052 313 1079 251" stroke="#00f4ff" strokeWidth="3" />
      <path d="m1084 239-10 12 11 4Z" fill="#00f4ff" />
      <path d="M1087 50h10l-5 5Z" fill="#7d6b59" />
      <path d="M4.500 49.500h1362v469H4.500Z" stroke="#000" />
    </svg>
  );
}

function RsiPlot() {
  return (
    <svg viewBox="4 520 1363 235" preserveAspectRatio="none" className="h-full min-h-0 w-full min-w-0" fill="none">
      <Columns from={521} to={753} />
      <path d="M5 592.500H1366M5 684.500H1366" stroke="#4a4640" strokeDasharray="3 3" />
      <path d="M5 753.500H1366" stroke="#7d6b59" strokeDasharray="3 3" />
      <polyline points={RSI_SLOW} stroke="#8a0dff" strokeWidth="2" />
      <polyline points={RSI_FAST} stroke="#0a24ff" strokeWidth="2" strokeLinejoin="round" />
      <path d="M4.500 520.500h1362v234H4.500Z" stroke="#000" />
    </svg>
  );
}

function ChartWindow() {
  return (
    <main className="flex min-h-0 flex-1 flex-col border-r border-l border-r-[#2b2e36] border-l-[#8d9092] bg-white pl-[3px] text-[9px] leading-3 text-black">
      <div className="flex min-h-0 flex-[470_1_0%]">
        <div className="relative grid min-w-0 flex-1">
          <PricePlot />
          <p className="absolute top-[2px] left-1 flex items-center gap-1 whitespace-pre">
            <svg viewBox="0 0 7 4" className="h-1 w-[7px]" aria-hidden="true">
              <path d="M0 0h7L3.500 4Z" />
            </svg>
            {"GBPUSD,Daily   1.2465 1.2642 1.2429 1.2584"}
          </p>
        </div>
        <div className="relative w-[39px] shrink-0">
          <ol className="flex h-full flex-col justify-between pt-2">
            {PRICES.map((price) => (
              <li key={price} className="-mb-0.5 flex items-center gap-0.5">
                <span className="h-px w-[3px] bg-black" />
                {price}
              </li>
            ))}
          </ol>
          <span className="absolute top-[44.7%] left-0 h-[11px] w-[34px] bg-black pl-[5px] leading-[11px] text-white">1.2584</span>
        </div>
      </div>
      <div className="h-px shrink-0 bg-[#8d8d8d]" />
      <div className="flex min-h-0 flex-[235_1_0%]">
        <div className="relative grid min-w-0 flex-1">
          <RsiPlot />
          <p className="absolute top-[3px] left-1 whitespace-pre">{"RSI(5) 77.9575  =>MA(89) 50.4486  =>MA(8) 51.3785"}</p>
        </div>
        <div className="relative w-[39px] shrink-0">
          <span className="absolute top-0.5 left-0.5">100</span>
          <span className="absolute top-[28%] left-0 flex items-center gap-px"><i className="h-px w-0.5 bg-black" />70</span>
          <span className="absolute top-[67%] left-0 flex items-center gap-px"><i className="h-px w-0.5 bg-black" />30</span>
          <span className="absolute bottom-0.5 left-0.5">0</span>
        </div>
      </div>
      <ol className="flex h-[19px] shrink-0 overflow-hidden pr-[39px]">
        {DATES.map((date) => (
          <li key={date} className="flex w-[4.59%] shrink-0 flex-col whitespace-nowrap">
            <span className="ml-px h-[3px] w-px bg-black" />
            {date}
          </li>
        ))}
      </ol>
    </main>
  );
}

/* ---------- chart tabs ---------- */

const TABS: [string, string][] = [
  ["#Bitcoin,H1", "w-[85px]"],
  ["#INDU,M5", "w-[70px]"],
  ["#SPX,Daily", "w-[74px]"],
  ["#CL,M5", "w-[59px]"],
  ["SILVER,M30", "w-[78px]"],
  ["GOLD,M30", "w-[71px]"],
  ["EURUSD,H1", "w-[79px]"],
  ["USDJPY,M30", "w-[81px]"],
  ["GBPUSD,Daily", "w-[86px]"],
  ["AUDUSD,H1", "w-[78px]"],
  ["USDCHF,M15", "w-[86px]"],
  ["USDCAD,M15", "w-[86px]"],
  ["EURCHF,M15", "w-[86px]"],
  ["EURJPY,M15", "w-[83px]"],
  ["EURGBP,H1", "w-[78px]"],
  ["NZDUSD,H1", "w-[78px]"],
  ["EURUSD,M30", "w-[87px]"],
];

function TabBar() {
  return (
    <footer className="flex h-[26px] shrink-0 flex-col border-t border-black bg-[#2b2e36]">
      <div className="flex h-5 items-center overflow-hidden border-t-2 border-[#8f9496] text-[10px] text-[#c2c4c6]">
        <div role="tablist" className="flex h-full items-center">
          {TABS.map(([name, width]) => {
            const active = name === "GBPUSD,Daily";
            return (
              <button
                key={name}
                type="button"
                role="tab"
                aria-selected={active}
                className={`flex shrink-0 items-center justify-center pr-1 whitespace-nowrap ${width} ${
                  active ? "h-full border border-t-0 border-[#e5e5e5] bg-black text-white" : "h-3.5 border-r border-[#b4b6b8]"
                }`}
              >
                {name}
              </button>
            );
          })}
        </div>
        <div className="ml-auto flex gap-[15px] pr-2">
          <button type="button" aria-label="Scroll left">
            <svg viewBox="0 0 4 6" className="h-1.5 w-1"><path d="M4 0v6L0 3Z" fill="#fff" /></svg>
          </button>
          <button type="button" aria-label="Scroll right">
            <svg viewBox="0 0 4 6" className="h-1.5 w-1"><path d="M0 0v6l4-3Z" fill="#7f8284" /></svg>
          </button>
        </div>
      </div>
      <div className="h-px bg-black" />
    </footer>
  );
}

function SideBadge() {
  return (
    <button type="button" aria-label="Remote session" className="absolute right-0 bottom-8 h-[50px] w-[23px]">
      <svg viewBox="0 0 23 50" className="h-[50px] w-[23px]" aria-hidden="true">
        <path d="M3 0h20v50L3 38.500Q0 37 0 34V3Q0 0 3 0Z" />
        <path d="M3 5h20v20H3Z" fill="#ff6a0f" />
        <circle cx="13.500" cy="15" r="8" fill="#0d0500" />
        <path d="m6 15 4-3.500v2.300h7v-2.300l4 3.500-4 3.500v-2.300h-7v2.300Z" fill="#ff7a1a" />
      </svg>
    </button>
  );
}

export default function App() {
  return (
    <div className="relative flex h-screen min-h-[480px] flex-col overflow-hidden bg-[#2b2e36] font-['DejaVu_Sans_Condensed','DejaVu_Sans',sans-serif]">
      <MenuBar />
      <div className="h-0.5 shrink-0 bg-[#5c5f60]" />
      <Toolbar />
      <div className="h-[4px] shrink-0 border-t-2 border-[#9a9c9d] bg-white" />
      <ChartWindow />
      <TabBar />
      <SideBadge />
    </div>
  );
}
